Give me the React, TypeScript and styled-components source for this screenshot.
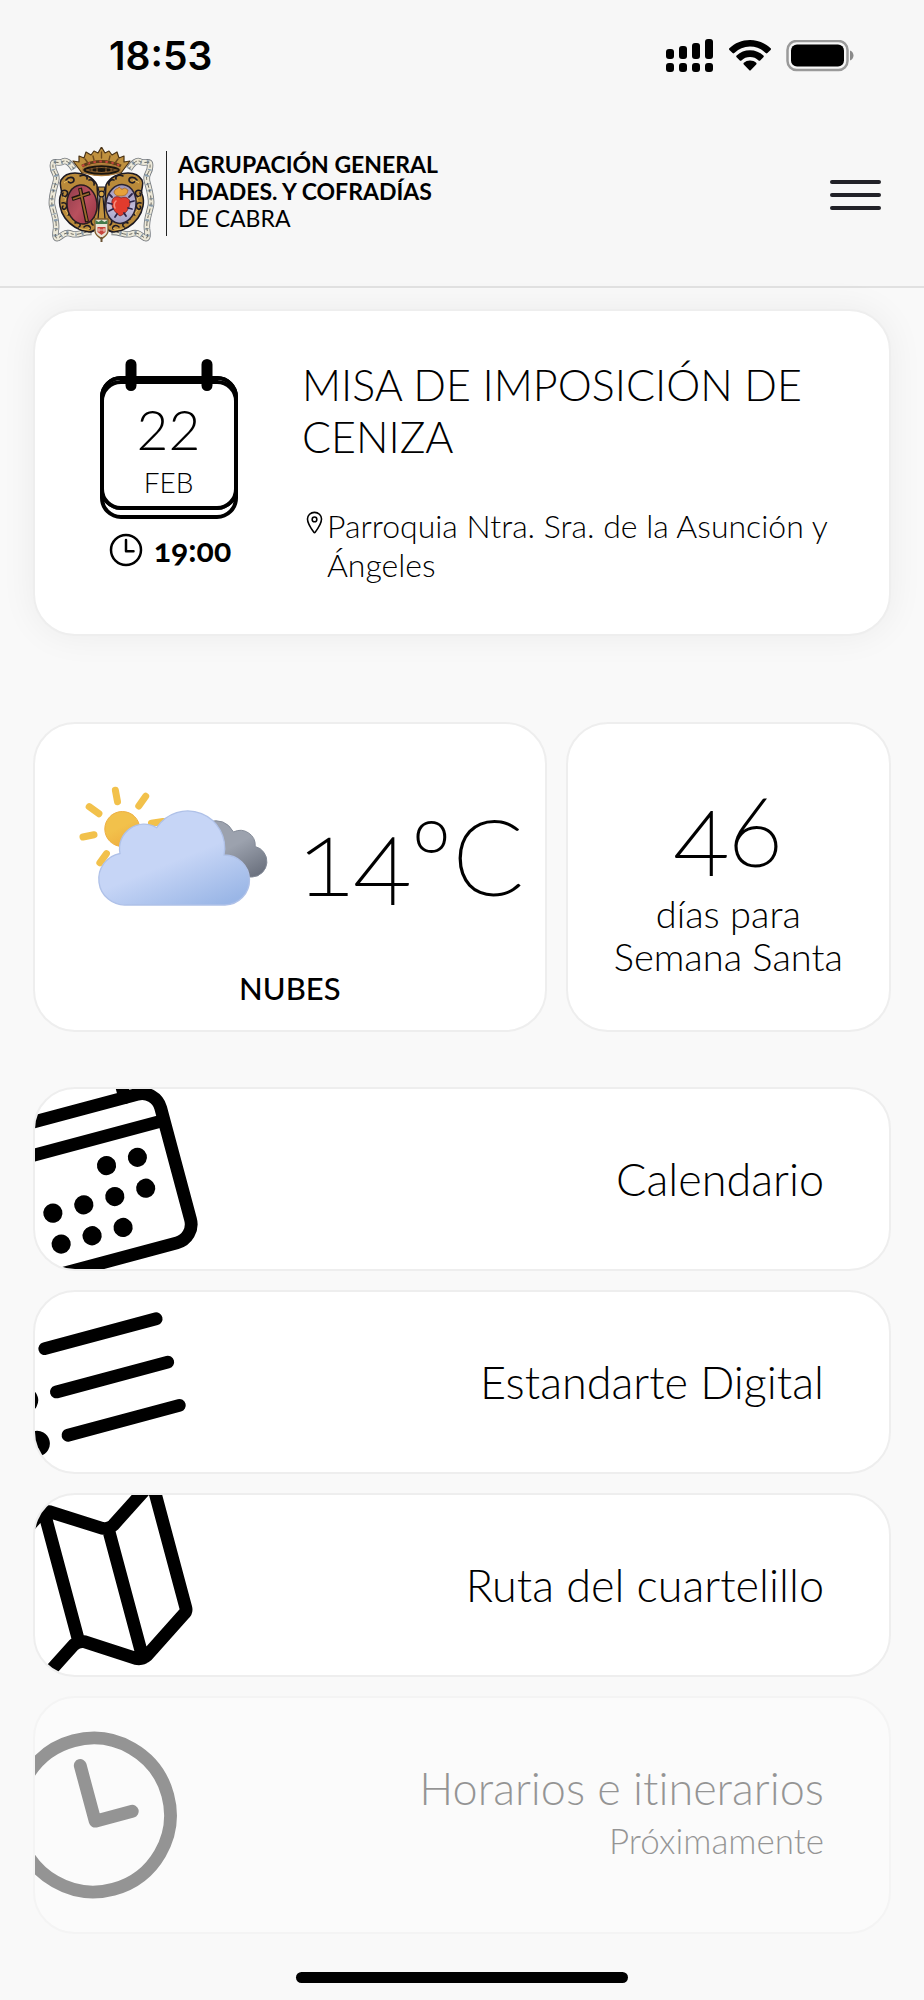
import React from "react";
import styled, { createGlobalStyle } from "styled-components";
import {
  IoCalendarOutline,
  IoListOutline,
  IoLocationOutline,
  IoMapOutline,
  IoTimeOutline,
} from "react-icons/io5";

const GlobalStyle = createGlobalStyle`
  *, *::before, *::after { box-sizing: border-box; }
  body {
    margin: 0;
    background: #f9f9f9;
    color: #000;
    font-family: Lato, "Open Sans", sans-serif;
    font-weight: 300;
    font-variant-ligatures: none;
  }
  h1, h2, p { margin: 0; font-weight: inherit; }
`;

/* ---------- Top area ---------- */

const Top = styled.header`
  background: #f7f7f7;
  border-bottom: 2px solid #e1e1e1;
`;

const StatusBar = styled.div`
  display: flex;
  align-items: center;
  justify-content: space-between;
  height: 104px;
  padding: 7px 70px 0 109px;
`;

const Clock = styled.time`
  font: 600 39px/44px Inter, sans-serif;
`;

const StatusIcons = styled.div`
  display: flex;
  align-items: center;
  gap: 15px;
`;

const NavBar = styled.div`
  display: flex;
  align-items: center;
  justify-content: space-between;
  height: 182px;
  padding: 0 43px 0 48px;
`;

const Brand = styled.a`
  display: flex;
  align-items: center;
  color: inherit;
  text-decoration: none;
`;

const BrandName = styled.span`
  display: flex;
  flex-direction: column;
  margin: 0 0 4px 10px;
  padding: 0 0 4px 11px;
  border-left: 1px solid #222;
  font-size: 23px;
  line-height: 27px;
`;

const BrandLine = styled.span<{ $strong?: boolean }>`
  font-weight: ${(p) => (p.$strong ? 700 : 400)};
`;

const MenuButton = styled.button`
  display: flex;
  flex-direction: column;
  gap: 9px;
  width: 51px;
  padding: 0;
  border: 0;
  background: none;
  cursor: pointer;
`;

const MenuBar = styled.span`
  height: 4px;
  border-radius: 2px;
  background: #222228;
`;

/* ---------- Cards ---------- */

const Main = styled.main`
  padding: 21px 33px 0;
`;

const Card = styled.section`
  border: 2px solid #eee;
  border-radius: 42px;
  background: #fff;
`;

const EventCard = styled(Card)`
  display: grid;
  grid-template-columns: 267px minmax(0, 1fr);
  padding: 48px 40px 50px 0;
  box-shadow: 0 0 36px rgba(0, 0, 0, 0.06);
`;

const DateColumn = styled.div`
  display: flex;
  flex-direction: column;
  align-items: center;
  gap: 10px;
`;

const DateBox = styled.div`
  display: grid;
  justify-items: center;
`;

const DateFrame = styled.svg`
  grid-area: 1 / 1;
`;

const DateText = styled.div`
  grid-area: 1 / 1;
  z-index: 1;
  display: flex;
  flex-direction: column;
  align-items: center;
  gap: 11px;
  padding-top: 44px;
`;

const Day = styled.span`
  font-size: 55px;
  line-height: 52px;
`;

const Month = styled.span`
  font-size: 28px;
  line-height: 32px;
`;

const Hour = styled.div`
  display: flex;
  align-items: center;
  gap: 8px;
  font-size: 32px;
  line-height: 40px;
  font-weight: 700;
  font-variant-numeric: oldstyle-nums;
`;

const EventTitle = styled.h1`
  margin-bottom: 43px;
  font-size: 43px;
  line-height: 52px;
`;

const Place = styled.p`
  display: flex;
  align-items: flex-start;
  font-size: 32px;
  line-height: 39px;

  svg {
    flex: none;
    margin-top: 4px;
  }
`;

const Summary = styled.div`
  display: grid;
  grid-template-columns: 30fr 19fr;
  gap: 19px;
  margin: 86px 0 55px;
`;

const WeatherCard = styled(Card)`
  padding: 60px 20px 22px 43px;
`;

const WeatherRow = styled.div`
  display: flex;
  align-items: flex-start;
  gap: 28px;
`;

const BigNumber = styled.p`
  font-weight: 200;
  font-variant-numeric: oldstyle-nums;
  -webkit-text-stroke: 2px #000;
`;

const Temperature = styled(BigNumber)`
  padding-top: 10px;
  font-size: 104px;
  line-height: 122px;
`;

const Sky = styled.p`
  margin-top: 52px;
  margin-right: 23px;
  font-size: 31px;
  line-height: 40px;
  font-weight: 500;
  text-align: center;
`;

const CountCard = styled(Card)`
  display: flex;
  flex-direction: column;
  align-items: center;
  justify-content: center;
  gap: 17px;
  padding-top: 2px;
`;

const Count = styled(BigNumber)`
  font-size: 100px;
  line-height: 96px;
`;

const CountLabel = styled.p`
  font-size: 38px;
  line-height: 43px;
  text-align: center;
`;

/* ---------- Links ---------- */

const LinkList = styled.nav`
  display: flex;
  flex-direction: column;
  gap: 19px;
`;

const LinkCard = styled.a<{ $disabled?: boolean }>`
  position: relative;
  display: flex;
  flex-direction: column;
  align-items: flex-end;
  overflow: hidden;
  padding: 65px;
  border: 2px solid #eee;
  border-radius: 42px;
  background: #fff;
  color: inherit;
  text-decoration: none;
  opacity: ${(p) => (p.$disabled ? 0.4 : 1)};

  svg {
    position: absolute;
    top: 50%;
    left: -44px;
    transform: translateY(-50%) rotate(-15deg);
  }
`;

const LinkTitle = styled.span`
  font-size: 45px;
  line-height: 50px;
`;

const LinkNote = styled.span`
  font-size: 35px;
  line-height: 54px;
`;

const HomeIndicator = styled.div`
  width: 36%;
  height: 11px;
  margin: 38px auto 17px;
  border-radius: 6px;
  background: #000;
`;

/* ---------- Drawings ---------- */

const Signal = () => (
  <svg width="48" height="34" viewBox="0 0 48 34" aria-hidden="true">
    {[0, 13, 26, 39].map((x, i) => (
      <g key={x}>
        <rect x={x} y={[10, 7, 4, 0][i]} width="8" height={[10, 13, 16, 20][i]} rx="3" />
        <rect x={x} y="24" width="8" height="9" rx="3" />
      </g>
    ))}
  </svg>
);

const Wifi = () => (
  <svg width="42" height="31" viewBox="0 0 42 31" aria-hidden="true">
    <path d="M21 0C29 0 36.200 3.100 41.600 8.200a1.200 1.200 0 0 1 0 1.700l-3.200 3.200a1.200 1.200 0 0 1-1.700 0A22.600 22.600 0 0 0 21 6.600 22.600 22.600 0 0 0 5.300 13.100a1.200 1.200 0 0 1-1.700 0L.4 9.900a1.200 1.200 0 0 1 0-1.700C5.800 3.100 13 0 21 0z" />
    <path d="M21 10.300c5.200 0 9.900 2 13.400 5.200a1.200 1.200 0 0 1 0 1.700l-3.200 3.200a1.200 1.200 0 0 1-1.600 0A12.700 12.700 0 0 0 21 17a12.700 12.700 0 0 0-8.600 3.400 1.200 1.200 0 0 1-1.600 0l-3.200-3.200a1.200 1.200 0 0 1 0-1.700A19.700 19.700 0 0 1 21 10.300z" />
    <path d="M21 20.500c2.400 0 4.600.9 6.200 2.300.5.500.5 1.200 0 1.700l-5.300 5.400a1.200 1.200 0 0 1-1.800 0l-5.300-5.400c-.5-.5-.5-1.200 0-1.700A9.300 9.300 0 0 1 21 20.500z" />
  </svg>
);

const Battery = () => (
  <svg width="68" height="32" viewBox="0 0 68 32" aria-hidden="true">
    <rect x="1.500" y="1" width="60" height="29" rx="9" fill="none" stroke="#9a9a9a" strokeWidth="2.500" />
    <rect x="5" y="4.500" width="53" height="22" rx="6" />
    <path d="M64 10.500c2.300.9 3.500 2.800 3.500 5s-1.200 4.100-3.500 5z" fill="#8a8a8a" />
  </svg>
);

const RIBBON =
  "M26 22C22 16 18 12 14 15C9 17 4 12 5 20C5 26 10 27 8 34C6 42 3 50 4 58C6 67 9 74 8 82C7 88 7 92 10 91C14 89 17 84 24 87C30 89 36 84 44 85";

const Ribbon = () => (
  <g fill="none" strokeLinejoin="round">
    <path d={RIBBON} stroke="#767b80" strokeWidth="6.500" />
    <path d={RIBBON} stroke="#ece8d8" strokeWidth="4.800" />
    <path d={RIBBON} stroke="#8a9eb0" strokeWidth="4" strokeDasharray="1.200 5 2 7" />
    <path d={RIBBON} stroke="#6c6a62" strokeWidth="1" strokeDasharray="3 3 5 2" />
  </g>
);

const Scrollwork = () => (
  <g>
    <path
      d="M49 38C45 30 36 26 27 26C21 26 16 28 13 33C10 39 15 41 13 47C10 54 12 64 17 71C22 78 31 84 41 85C48 85 51 78 51 70Z"
      fill="#b98a3a" stroke="#1d1a22" strokeWidth="1.500" />
    <path
      d="M18 33c3-4 8-3 8 0s-5 4-6 1M14 44c4-2 7 1 5 4s-6 1-4-2M14 56c4-1 6 2 4 5s-5 0-3-2M20 68c4-2 7 1 5 4M27 76c4-2 7 2 4 4M36 80c3-3 7-1 6 2M32 29c4-2 8 0 7 3M41 33c3-1 6 2 5 5M47 60c-3 1-4 5-1 7M46 70c-3 1-4 6-1 8"
      fill="none" stroke="#1d1a22" strokeWidth="1.600" strokeLinecap="round" />
    <path
      d="M16 36c2-2 4-2 6-3M15 50c2 0 3 2 2 4M17 63c2 1 3 3 2 5M31 81c4 2 8 2 11 0"
      fill="none" stroke="#e8bf62" strokeWidth="1" />
  </g>
);

const Crest = () => (
  <svg width="108" height="96" viewBox="0 0 108 96" role="img" aria-label="Escudo de la Agrupación">
    <defs>
      <linearGradient id="red" x1="0" y1="0" x2="1" y2="1">
        <stop offset="0" stopColor="#8c3b49" />
        <stop offset="0.500" stopColor="#b9505e" />
        <stop offset="1" stopColor="#93303f" />
      </linearGradient>
      <linearGradient id="lilac" x1="0" y1="0" x2="0" y2="1">
        <stop offset="0" stopColor="#9d93b4" />
        <stop offset="0.600" stopColor="#c3bfdc" />
        <stop offset="1" stopColor="#a4a0c6" />
      </linearGradient>
    </defs>
    <Ribbon />
    <g transform="translate(107 0) scale(-1 1)"><Ribbon /></g>
    <path d="M36 27H71L60 38L53.500 42L46 37Z" fill="#fff" />
    <Scrollwork />
    <g transform="translate(107 0) scale(-1 1)"><Scrollwork /></g>
    <ellipse cx="34" cy="57.500" rx="15" ry="19.500" fill="url(#red)" stroke="#2a1c22" strokeWidth="1.500" transform="rotate(-6 34 57.500)" />
    <ellipse cx="73" cy="57" rx="15" ry="19.500" fill="url(#lilac)" stroke="#2a2433" strokeWidth="1.500" transform="rotate(8 73 57)" />
    <path d="M32 41L39 75M24 52L42 46" stroke="#1f1410" strokeWidth="4" />
    <path d="M32 42L39 74M25 52L41 46.500" stroke="#9a6a2c" strokeWidth="1.800" />
    <path d="M66 45c2-5 4-2 5-5 2 1 2 3 4 2 2-2 3 0 5 1-1 5-2 5-6 6-4 0-7 0-8-4z" fill="#e6a13a" stroke="#a7621f" strokeWidth="0.800" />
    <path d="M72 69C66 65 63 59 64 54C65 49 70 49 73 51C77 49 82 51 82 56C81 63 77 67 72 69Z" fill="#e23b2d" stroke="#7a1f1d" strokeWidth="0.800" />
    <path d="M68 54c-2 2-2 5-1 7" fill="none" stroke="#f5907f" strokeWidth="1.600" strokeLinecap="round" />
    <path d="M61 47l3 3M60 56l4 1M61 64l4-2M67 70l2-3M78 69l-2-3M84 62l-4-1M86 54l-4 1M84 47l-3 3" stroke="#2c2548" strokeWidth="1.800" strokeLinecap="round" />
    <path d="M50 40h7l-2 10 2 22-3 8-4-8 2-22z" fill="#c4953f" stroke="#1d1a22" strokeWidth="1.200" />
    <circle cx="53.500" cy="47" r="2.800" fill="#d9a94a" stroke="#1d1a22" strokeWidth="1.200" />
    <path
      d="M34 26L25 14L31 15L31 9L36 11L38 5L43 8L46 4L50 6L53.500 0L57 6L61 4L64 8L69 5L71 11L76 9L76 15L82 14L73 26Z"
      fill="#c0913f" stroke="#4b3417" strokeWidth="1.200" strokeLinejoin="round" />
    <path d="M34 19Q53.500 10 73 19" fill="none" stroke="#5d3c1a" strokeWidth="3" />
    <path d="M34 19Q53.500 10 73 19" fill="none" stroke="#c8463c" strokeWidth="2" strokeDasharray="2.500 3.500" />
    <path d="M37 12l3 4M45 9l1 4M53.500 5v6M62 9l-1 4M70 12l-3 4" stroke="#6d4a1f" strokeWidth="1.400" strokeLinecap="round" />
    <ellipse cx="53.500" cy="23" rx="19" ry="5.500" fill="#19150f" stroke="#a9783a" strokeWidth="1.500" />
    <path d="M38 23Q53.500 18 69 23Q53.500 28 38 23M44 21v4M49 20v6M58 20v6M63 21v4" fill="none" stroke="#81592c" strokeWidth="1.100" />
    <path d="M47 72H60V84C60 88 57 89 53.500 92C50 89 47 88 47 84Z" fill="#e9e2d5" stroke="#7b5a2a" strokeWidth="1.300" />
    <path d="M47.500 73l3 2 3-2 3 2 3-2v4h-12z" fill="#447a4c" />
    <path d="M49.500 80h8v5l-4 3-4-3z" fill="#c8443c" />
    <path d="M51 81v4M56 81v4M49.500 83h8" stroke="#f0d9cf" strokeWidth="0.800" />
    <path d="M53.500 90v5" stroke="#6a5335" strokeWidth="2" />
  </svg>
);

const CalendarFrame = () => (
  <DateFrame width="138" height="161" viewBox="0 0 138 161" aria-hidden="true">
    <g fill="#fff" stroke="#000" strokeWidth="4">
      <rect x="2" y="19" width="134" height="139" rx="19" />
      <rect x="2" y="19" width="134" height="130" rx="19" />
      <rect x="2" y="23" width="134" height="126" rx="19" />
    </g>
    <path d="M20 21H118" stroke="#000" strokeWidth="8" />
    <path d="M31 5.500V26.500M107 5.500V26.500" stroke="#000" strokeWidth="11" strokeLinecap="round" />
  </DateFrame>
);

const CloudyDay = () => (
  <svg width="192" height="124" viewBox="0 0 192 124" role="img" aria-label="Nubes y sol">
    <defs>
      <linearGradient id="sun" x1="0.200" y1="0" x2="0.700" y2="1">
        <stop offset="0.450" stopColor="#f2c14b" />
        <stop offset="1" stopColor="#eead3f" />
      </linearGradient>
      <linearGradient id="cloud" x1="0.250" y1="0.150" x2="0.800" y2="1">
        <stop offset="0.450" stopColor="#c6d5f6" />
        <stop offset="1" stopColor="#9ab6e6" />
      </linearGradient>
      <linearGradient id="darkCloud" x1="0.300" y1="0.100" x2="0.800" y2="1">
        <stop offset="0.350" stopColor="#9ca2ae" />
        <stop offset="1" stopColor="#6b717e" />
      </linearGradient>
    </defs>
    <path
      d="M37.400 6.300L39.500 17.700M67.700 12.300L60.800 22M11.200 22.700L20.900 29.700M5 53L16 50.700M28.400 69.700L21.900 78.700M73.500 39.300L85 37.500"
      stroke="#f2c14b" strokeWidth="7" strokeLinecap="round" />
    <circle cx="44.300" cy="45" r="17.500" fill="url(#sun)" stroke="#eeb044" />
    <path
      d="M130 38Q147 33 155.500 48A15 15 0 0 1 177.200 62.500A15.500 15.500 0 0 1 174.400 93H140Z"
      fill="url(#darkCloud)" stroke="#848b98" />
    <path
      d="M48.500 121A26 26 0 0 1 42 69.500A24.500 24.500 0 0 1 78.700 43.700A37 37 0 0 1 146 71A25 25 0 0 1 147 121Z"
      fill="url(#cloud)" stroke="#afc1e8" strokeWidth="1.300" />
  </svg>
);

const links = [
  { title: "Calendario", Icon: IoCalendarOutline },
  { title: "Estandarte Digital", Icon: IoListOutline },
  { title: "Ruta del cuartelillo", Icon: IoMapOutline },
  { title: "Horarios e itinerarios", Icon: IoTimeOutline, note: "Próximamente" },
];

export default function App() {
  return (
    <>
      <GlobalStyle />
      <Top>
        <StatusBar>
          <Clock>18:53</Clock>
          <StatusIcons>
            <Signal />
            <Wifi />
            <Battery />
          </StatusIcons>
        </StatusBar>
        <NavBar>
          <Brand href="#inicio">
            <Crest />
            <BrandName>
              <BrandLine $strong>AGRUPACIÓN GENERAL</BrandLine>
              <BrandLine $strong>HDADES. Y COFRADÍAS</BrandLine>
              <BrandLine>DE CABRA</BrandLine>
            </BrandName>
          </Brand>
          <MenuButton type="button" aria-label="Abrir menú">
            <MenuBar />
            <MenuBar />
            <MenuBar />
          </MenuButton>
        </NavBar>
      </Top>

      <Main>
        <EventCard>
          <DateColumn>
            <DateBox>
              <CalendarFrame />
              <DateText>
                <Day>22</Day>
                <Month>FEB</Month>
              </DateText>
            </DateBox>
            <Hour>
              <IoTimeOutline size={40} aria-hidden="true" />
              19:00
            </Hour>
          </DateColumn>
          <div>
            <EventTitle>MISA DE IMPOSICIÓN DE CENIZA</EventTitle>
            <Place>
              <IoLocationOutline size={25} aria-hidden="true" />
              <span>Parroquia Ntra. Sra. de la Asunción y Ángeles</span>
            </Place>
          </div>
        </EventCard>

        <Summary>
          <WeatherCard>
            <WeatherRow>
              <CloudyDay />
              <Temperature>14ºC</Temperature>
            </WeatherRow>
            <Sky>NUBES</Sky>
          </WeatherCard>
          <CountCard>
            <Count>46</Count>
            <CountLabel>
              días para
              <br />
              Semana Santa
            </CountLabel>
          </CountCard>
        </Summary>

        <LinkList>
          {links.map(({ title, Icon, note }) => (
            <LinkCard key={title} href="#" $disabled={Boolean(note)}>
              <Icon size={205} aria-hidden="true" />
              <LinkTitle>{title}</LinkTitle>
              {note && <LinkNote>{note}</LinkNote>}
            </LinkCard>
          ))}
        </LinkList>
      </Main>
      <HomeIndicator />
    </>
  );
}
